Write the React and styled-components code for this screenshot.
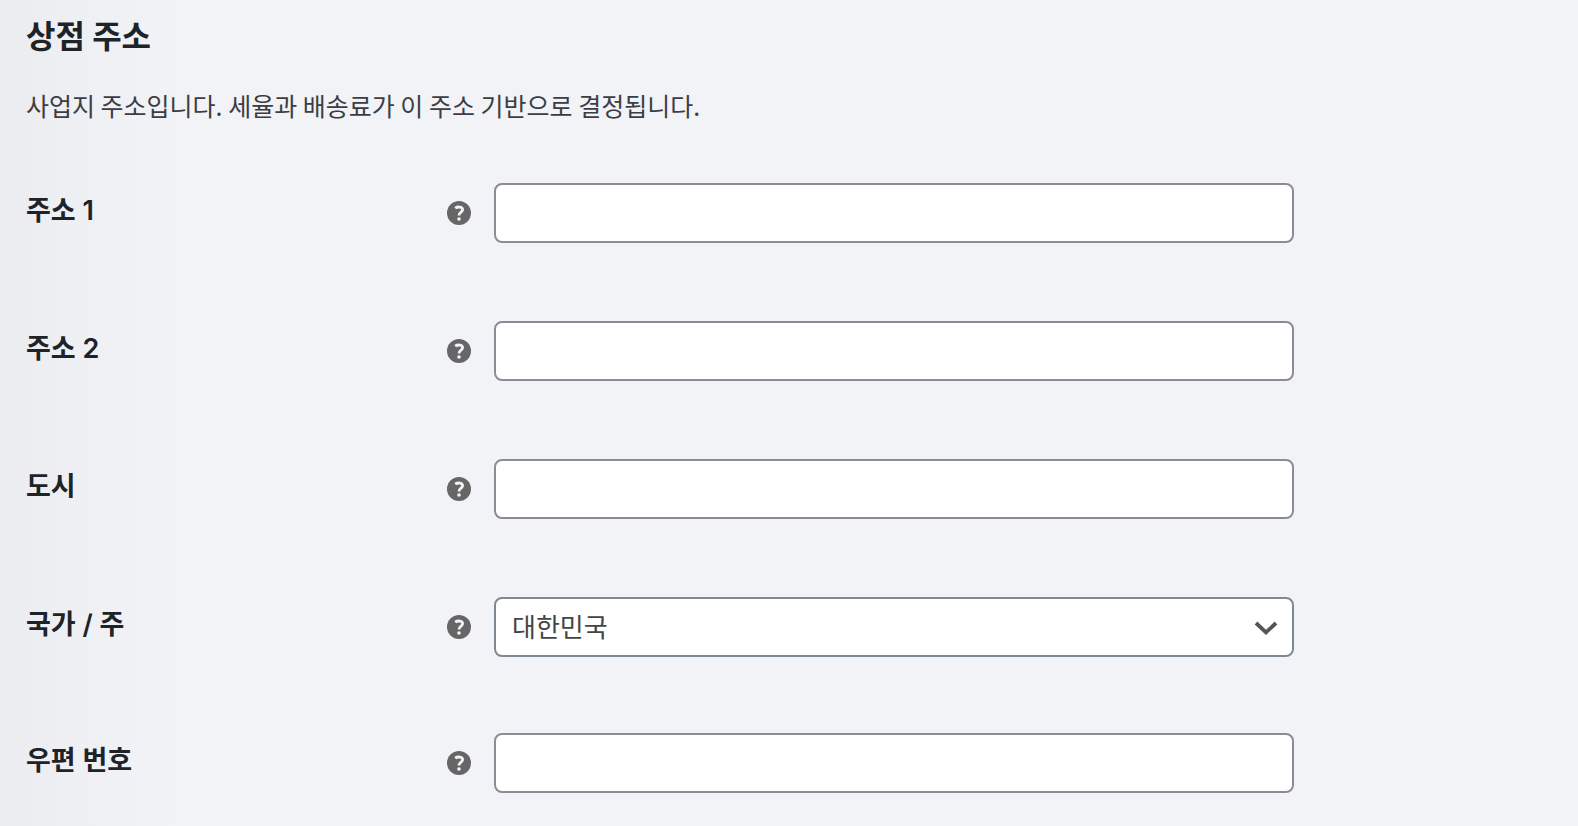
import React from 'react'
import styled, { createGlobalStyle } from 'styled-components'

const GlobalStyle = createGlobalStyle`
  * {
    box-sizing: border-box;
  }

  body {
    margin: 0;
    min-height: 100vh;
    background: #f1f3f7 linear-gradient(to right, #ebecf0 0, #eff0f4 84px, #f1f3f7 180px) no-repeat;
    color: #1d2327;
    font-family: 'Inter', 'Noto Sans CJK KR', sans-serif;
  }
`

// 설정 폼
const Settings = styled.form`
  padding: 14px 26px 0;
`

const Title = styled.h2`
  margin: 0;
  font-family: 'Noto Sans CJK KR', sans-serif;
  font-size: 32px;
  font-weight: 700;
  line-height: 40px;
`

const Description = styled.p`
  margin: 32px 0 58px;
  color: #3c3d44;
  font-family: 'Noto Sans CJK KR', sans-serif;
  font-size: 25px;
  font-weight: 400;
  line-height: 39px;
`

const Row = styled.div`
  display: grid;
  grid-template-columns: 421px 24px minmax(0, 800px);
  align-items: center;
  margin-bottom: ${({ $short }) => ($short ? '76px' : '78px')};

  &:last-child {
    margin-bottom: 0;
  }
`

const Label = styled.label`
  padding-bottom: 4px;
  font-size: 27px;
  font-weight: 600;
  line-height: 36px;
`

const HelpIcon = styled.svg`
  display: block;
  width: 24px;
  height: 24px;
`

const Control = styled.div`
  position: relative;
  margin-left: 23px;
  margin-right: -23px;
`

const TextInput = styled.input`
  display: block;
  width: 100%;
  height: 60px;
  padding: 0 16px;
  border: 2px solid #8c8d94;
  border-radius: 8px;
  background: #fff;
  color: #444;
  font-family: inherit;
  font-size: 26px;
`

const Select = styled.select`
  display: block;
  width: 100%;
  height: 60px;
  padding: 0 48px 4px 16px;
  border: 2px solid #7e8993;
  border-radius: 8px;
  background: #fff;
  color: #444;
  font-family: 'Noto Sans CJK KR', sans-serif;
  font-size: 26px;
  appearance: none;
`

const Arrow = styled.svg`
  position: absolute;
  top: 23px;
  right: 16px;
  width: 24px;
  height: 16px;
  pointer-events: none;
`

function Help() {
  return (
    <HelpIcon viewBox="0 0 24 24" aria-hidden="true">
      <circle cx="12" cy="12" r="12" fill="#666" />
      <path
        d="M8.2 7.2C10 5.8 15.6 5 15.6 8.7C15.6 11.4 12 10.9 12 14.6"
        fill="none"
        stroke="#f1f3f7"
        strokeWidth="2.8"
      />
      <circle cx="12" cy="18" r="1.8" fill="#f1f3f7" />
    </HelpIcon>
  )
}

function Field({ id, label, short, children }) {
  return (
    <Row $short={short}>
      <Label htmlFor={id}>{label}</Label>
      <Help />
      <Control>{children}</Control>
    </Row>
  )
}

function App() {
  return (
    <>
      <GlobalStyle />
      <Settings>
        <Title>상점 주소</Title>
        <Description>
          사업지 주소입니다. 세율과 배송료가 이 주소 기반으로 결정됩니다.
        </Description>

        <Field id="address1" label="주소 1">
          <TextInput id="address1" type="text" />
        </Field>
        <Field id="address2" label="주소 2">
          <TextInput id="address2" type="text" />
        </Field>
        <Field id="city" label="도시">
          <TextInput id="city" type="text" />
        </Field>
        <Field id="country" label="국가 / 주" short>
          <Select id="country" defaultValue="KR">
            <option value="KR">대한민국</option>
          </Select>
          <Arrow viewBox="0 0 24 16" aria-hidden="true">
            <path d="M2 3L12 12.4L22 3" fill="none" stroke="#555" strokeWidth="3.8" />
          </Arrow>
        </Field>
        <Field id="postcode" label="우편 번호">
          <TextInput id="postcode" type="text" />
        </Field>
      </Settings>
    </>
  )
}

export default App
